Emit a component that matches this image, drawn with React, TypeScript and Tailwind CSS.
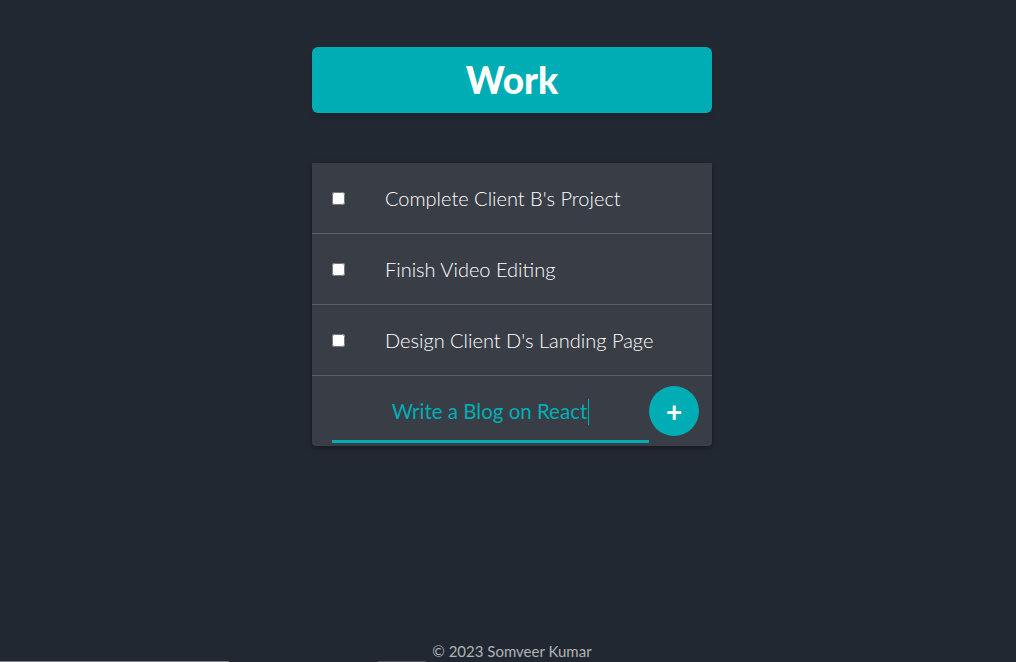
import React from 'react'

const tasks = ["Complete Client B's Project", 'Finish Video Editing', "Design Client D's Landing Page"]

function TaskRow({ title }: { title: string }) {
  return (
    <div className="flex h-[71px] items-center border-b border-[#5a5f66] px-5">
      <input type="checkbox" className="m-0 h-[13px] w-[13px] shrink-0" />
      <p className="ml-[40px] text-[20px] font-light text-white">{title}</p>
    </div>
  )
}

export default function App() {
  return (
    <div
      className="flex h-[662px] w-full flex-col items-center overflow-hidden bg-[#222831] pl-2"
      style={{ fontFamily: '"Lato", "Open Sans", sans-serif' }}
    >
      <div className="mt-[47px] flex h-[66px] w-[400px] items-center justify-center rounded-md bg-[#00adb5] shadow-md">
        <h1 className="text-[37px] font-black text-white">Work</h1>
      </div>

      <div className="mt-[50px] w-[400px] rounded-b-sm bg-[#393e46] shadow-[0_2px_6px_rgba(0,0,0,0.35)]">
        {tasks.map((t) => (
          <TaskRow key={t} title={t} />
        ))}
        <div className="flex h-[70px] items-center pl-5 pr-[13px]">
          <div className="flex h-[63px] flex-1 items-center justify-center border-b-[3px] border-[#00adb5] pt-[4px]">
            <span className="text-[20.5px] text-[#00adb5]">Write a Blog on React</span>
            <span className="ml-px h-[26px] w-px bg-[#00adb5]" />
          </div>
          <button className="flex h-[50px] w-[50px] items-center justify-center rounded-full bg-[#00adb5] text-[28px] font-bold leading-none text-white">
            +
          </button>
        </div>
      </div>

      <div className="flex-1" />
      <p className="text-[15px] leading-[20px] text-[#b0b3b8]">© 2023 Somveer Kumar</p>
      <div className="-ml-2 flex h-px w-[1016px]">
        <div className="w-[229px] bg-[#7b7e83]" />
        <div className="w-[149px]" />
        <div className="w-[48px] bg-[#53575d]" />
      </div>
    </div>
  )
}
